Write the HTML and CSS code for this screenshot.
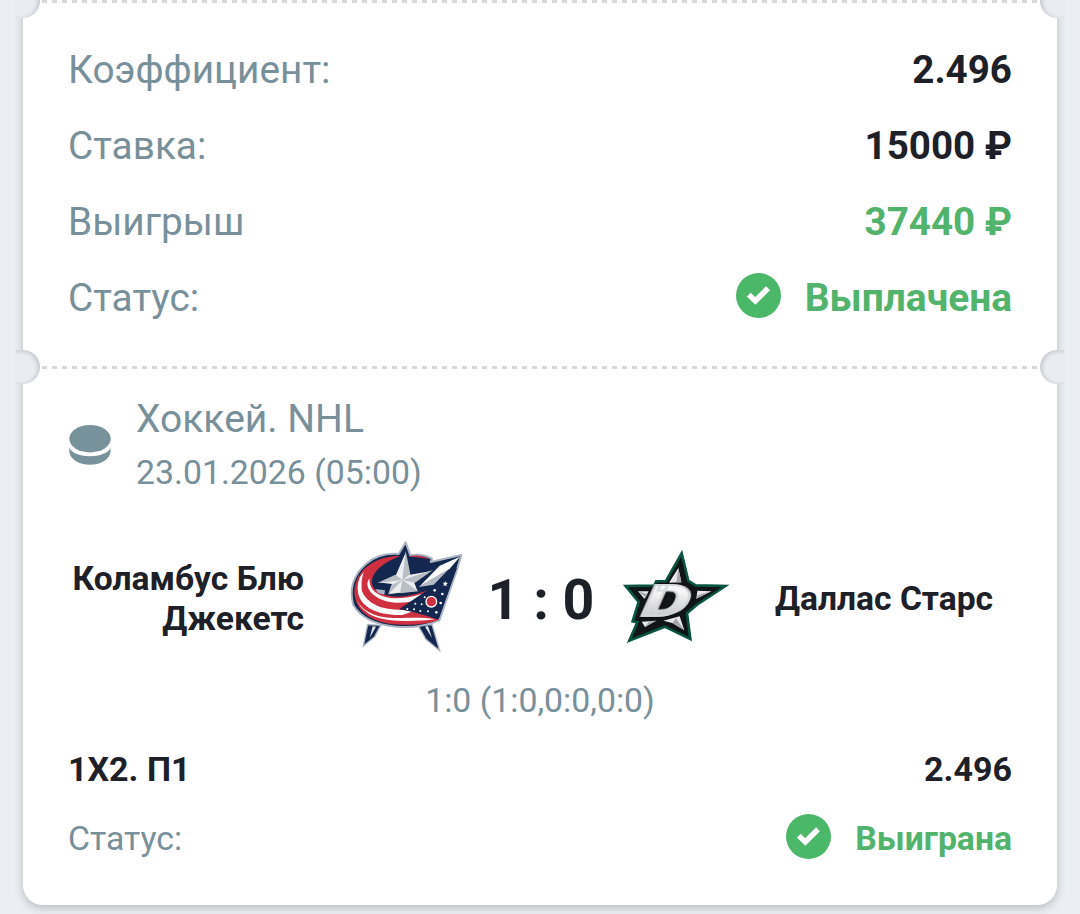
FILE: index.html
```html
<!DOCTYPE html>
<html lang="ru">

<head>
    <meta charset="UTF-8">
    <meta name="viewport" content="width=device-width, initial-scale=1.0">
    <title>Ставка</title>
    <link rel="stylesheet" href="styles.css">
</head>

<body>
    <div class="ticket">
        <div class="divider">
            <div class="notches"><i class="notch left"></i><i class="notch right"></i></div>
        </div>

        <div class="summary">
            <div class="row">
                <span class="label">Коэффициент:</span>
                <span class="value">2.496</span>
            </div>
            <div class="row">
                <span class="label">Ставка:</span>
                <span class="value">15000 ₽</span>
            </div>
            <div class="row">
                <span class="label">Выигрыш</span>
                <span class="value green">37440 ₽</span>
            </div>
            <div class="row">
                <span class="label">Статус:</span>
                <span class="value green status">
                    <svg class="check" viewBox="0 0 45 45">
                        <circle cx="22.5" cy="22.5" r="22.5" />
                        <path d="M12.7 21.6 L19.3 28 L32 15.2" />
                    </svg>
                    Выплачена
                </span>
            </div>
        </div>

        <div class="divider">
            <div class="notches"><i class="notch left"></i><i class="notch right"></i></div>
        </div>

        <div class="event">
            <div class="league">
                <svg class="puck" viewBox="0 0 42 40">
                    <ellipse cx="21" cy="13.7" rx="20.7" ry="13.7" />
                    <path d="M.3 22.7 C5 34 37 34 41.5 22.7 V27 C39 44 3 44 .3 27 Z" />
                </svg>
                <div>
                    <div class="league-name">Хоккей. NHL</div>
                    <div class="date">23.01.2026 (05:00)</div>
                </div>
            </div>

            <div class="match">
                <div class="team home">Коламбус Блю Джекетс</div>
                <svg class="logo home-logo" viewBox="0 0 420 405">
                    <!-- legs -->
                    <path d="M83 284 L122 286 L104 320 L70 348 Z M234 286 L276 284 L299 362 L258 328 Z" fill="#14284f" stroke="#aab3c2" stroke-width="4" />
                    <path d="M98 289 L108 290 L89 324 Z M255 290 L264 288 L276 324 Z" fill="#dfe3ea" />
                    <!-- body -->
                    <path d="M176 72 L197 37 L211 76 Q245 69 276 86 L272 96 L364 75 L349 125 L298 271 Q240 296 170 290 Q74 282 40 225 Q20 153 78 102 Q117 68 176 72 Z" fill="#14284f" stroke="#aab3c2" stroke-width="6" stroke-linejoin="round" />
                    <!-- stripes -->
                    <path d="M181 77 C95 78 37 130 44 198 C55 260 120 286 195 284 C240 284 275 278 297 269 L195 237 L266 180 C220 197 165 210 121 190 C78 168 85 115 181 77 Z" fill="#cf3040" />
                    <path d="M71 127 C51 188 80 216 123 232 C160 242 190 238 219 244 L187 255 C112 257 53 231 53 174 C54 151 60 138 71 127 Z" fill="#fff" />
                    <path d="M81 134 C70 177 94 207 139 216 C166 219 190 220 213 219 L187 235 C126 239 74 213 65 180 Q64 155 81 134 Z" fill="#cf3040" />
                    <path d="M88 145 C87 180 112 199 151 204 C179 207 210 202 248 191 L222 214 C177 223 119 219 91 185 Q75 165 88 145 Z" fill="#fff" />
                    <path d="M48 204 C66 252 126 267 185 264 C224 263 252 262 285 268 C224 275 129 278 87 251 Q56 232 48 204 Z" fill="#fff" />
                    <path d="M205 79 Q240 71 267 88 L244 83 Z" fill="#cf3040" />
                    <!-- ribbon and canton -->
                    <path d="M237 171 L299 107 L360 80 L329 116 Z" fill="#fff" />
                    <path d="M237 171 L286 140 L327 117 L281 164 Z" fill="#b5bbc4" />
                    <path d="M178 237 L286 164 L351 113 L297 264 Z" fill="#14284f" />
                    <!-- star -->
                    <path d="M197 62 L211 132 L279 120 L225 158 L235 184 L180 190 L144 195 L154 164 L112 159 L166 134 Z" fill="#eceef1" stroke="#14284f" stroke-width="4" />
                    <path d="M197 62 L211 132 L187 150 Z M279 120 L225 158 L187 150 Z M235 184 L187 150 L180 190 Z M144 195 L187 150 L154 164 Z M112 159 L187 150 L166 134 Z" fill="#b9bec5" />
                    <path d="M106 177 L135 181 L133 194 L114 189 Z" fill="#aab3c2" />
                    <circle cx="274" cy="215" r="16" fill="#cf3040" stroke="#fff" stroke-width="4" />
                    <path d="M316 153 L318 158 L324 159 L319 163 L320 169 L315 166 L310 168 L312 162 L308 158 L314 158 Z" fill="#fff" />
                    <g fill="#fff">
                        <circle cx="284" cy="181" r="4" />
                        <circle cx="307" cy="192" r="4" />
                        <circle cx="302" cy="219" r="4" />
                        <circle cx="289" cy="247" r="4" />
                        <circle cx="264" cy="244" r="3" />
                        <circle cx="245" cy="223" r="3" />
                        <circle cx="241" cy="243" r="3" />
                        <circle cx="222" cy="238" r="3" />
                        <circle cx="202" cy="237" r="3" />
                        <circle cx="226" cy="221" r="3" />
                        <circle cx="254" cy="202" r="3" />
                    </g>
                </svg>
                <div class="score">1 : 0</div>
                <svg class="logo away-logo" viewBox="0 0 390 375">
                    <defs>
                        <linearGradient id="silver" x1="0" y1="0" x2="0" y2="1">
                            <stop offset=".3" stop-color="#f7f7f7" />
                            <stop offset="1" stop-color="#b4b5b8" />
                        </linearGradient>
                    </defs>
                    <path d="M215 55 L235 138 L257 151 L346 153 L260 210 L231 235 L241 312 L164 275 L58 317 L82 262 L68 259 L86 201 L47 153 L133 152 L139 139 L168 138 Z" fill="#111516" stroke="#09543f" stroke-width="8" stroke-linejoin="miter" />
                    <path d="M205 99 L214 142 L177 143 Z M84 169 L116 169 L107 187 L103 191 Z M262 167 L304 169 L259 191 Z M95 260 L138 257 L105 276 Z M160 257 L209 244 L223 286 L187 264 Z" fill="#e7e7e8" />
                    <path d="M205 99 L214 142 L199 143 Z M84 169 L112 178 L107 187 Z M304 169 L259 191 L264 180 Z M105 276 L138 257 L117 260 Z M223 286 L187 264 L198 250 Z" fill="#a6a7aa" />
                    <text class="logo-letter" transform="translate(83 243) skewX(-24) scale(1.65 1)" fill="url(#silver)">D</text>
                </svg>
                <div class="team away">Даллас Старс</div>
            </div>

            <div class="periods">1:0 (1:0,0:0,0:0)</div>

            <div class="row outcome">
                <span>1X2. П1</span>
                <span>2.496</span>
            </div>
            <div class="row result">
                <span class="label">Статус:</span>
                <span class="value green status">
                    <svg class="check" viewBox="0 0 45 45">
                        <circle cx="22.5" cy="22.5" r="22.5" />
                        <path d="M12.7 21.6 L19.3 28 L32 15.2" />
                    </svg>
                    Выиграна
                </span>
            </div>
        </div>
    </div>
</body>

</html>
```

FILE: styles.css
```css
* {
    box-sizing: border-box;
    padding: 0;
    margin: 0;
}

body {
    height: 914px;
    overflow: hidden;
    background: #ebeff4;
    font-family: Roboto, "Noto Sans", sans-serif;
    color: #1d2027;
}

.ticket {
    height: 905px;
    margin: 0 23px;
    background: #fff;
    border-radius: 0 0 20px 20px;
    box-shadow: 0 3px 10px rgba(0, 0, 0, 0.22);
}

/* dashed tear line, 5px dash every 10px */
.divider {
    position: relative;
    height: 3px;
    background: repeating-linear-gradient(90deg, #d9d9da 0 5px, transparent 5px 10px);
    background-position-x: 9px;
}

/* clips the round cutouts and covers the shadow beside them */
.notches {
    position: absolute;
    top: -16px;
    left: -7px;
    right: -7px;
    height: 34px;
    overflow: hidden;
}

.notch {
    position: absolute;
    top: 0;
    width: 44px;
    height: 34px;
    background: #e9edf2;
}

.left {
    left: -20px;
    border-radius: 0 17px 17px 0;
    box-shadow: inset -2px 1px 4px rgba(0, 0, 0, 0.17);
}

.right {
    right: -20px;
    border-radius: 17px 0 0 17px;
    box-shadow: inset 2px 1px 4px rgba(0, 0, 0, 0.17);
}

.summary {
    height: 363px;
    padding: 28px 45px 0;
}

.row {
    display: flex;
    align-items: center;
    justify-content: space-between;
    height: 76px;
    font-size: 38.8px;
}

.label {
    color: #78909a;
}

.value {
    font-size: 38.6px;
    font-weight: 700;
}

.green {
    color: #51b36c;
}

.status {
    display: flex;
    align-items: center;
    gap: 24px;
}

.summary .status {
    font-size: 38.9px;
}

.check {
    width: 45px;
    height: 45px;
    margin-top: -3px;
    fill: #4bb768;
}

.check path {
    fill: none;
    stroke: #fff;
    stroke-width: 5.5;
}

.event {
    padding: 22px 45px 0;
}

.league {
    display: flex;
    align-items: center;
    gap: 25px;
    height: 110px;
    padding-left: 1px;
    color: #78909a;
}

.puck {
    width: 42px;
    height: 40px;
    margin-top: -2px;
    fill: #78929b;
}

.league-name {
    font-size: 39px;
    line-height: 54px;
}

.date {
    font-size: 33.8px;
    line-height: 54px;
}

.match {
    display: flex;
    align-items: center;
    height: 135px;
    margin-top: 29px;
}

.team {
    padding-top: 2px;
    font-size: 33.6px;
    font-weight: 700;
    line-height: 40px;
}

.home {
    width: 236px;
    text-align: right;
}

.logo {
    flex: none;
}

.home-logo {
    width: 140px;
    height: 135px;
    margin-left: 36px;
}

.score {
    width: 122px;
    padding-top: 6px;
    text-align: center;
    font-size: 55.5px;
    font-weight: 700;
}

.away-logo {
    width: 130px;
    height: 125px;
    margin: 0 35px 0 8px;
}

.logo-letter {
    font: 900 130px Roboto, sans-serif;
    stroke: #d5d6d8;
    stroke-width: 5;
    filter: drop-shadow(0 0 3px #000);
}

.periods {
    margin-top: 16px;
    text-align: center;
    font-size: 33.8px;
    line-height: 40px;
    color: #78909a;
}

.outcome {
    height: 70px;
    margin-top: 13px;
    font-size: 34px;
    font-weight: 700;
}

.result {
    height: 68px;
    font-size: 33.8px;
}

.result .value {
    font-size: 33.7px;
}
```
